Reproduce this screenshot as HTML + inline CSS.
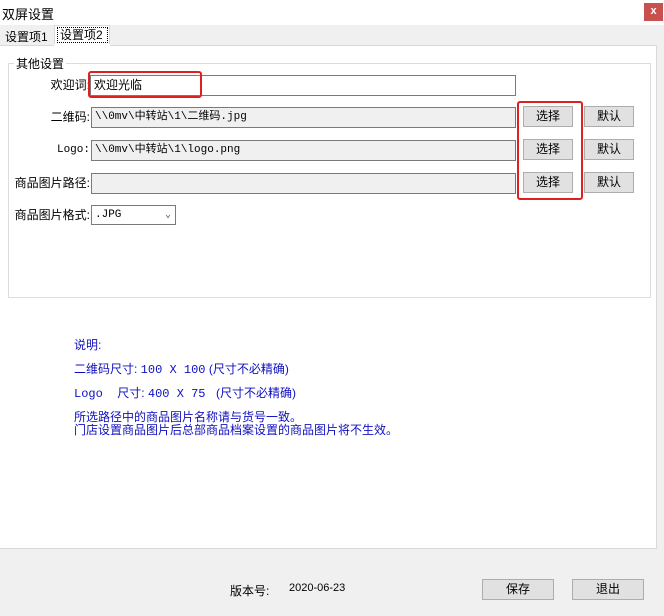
<!DOCTYPE html>
<html><head><meta charset="utf-8"><style>
*{box-sizing:border-box;margin:0;padding:0}
body{width:664px;height:616px;background:#f0f0f0;position:relative;overflow:hidden;font-family:"Liberation Sans","Noto Sans CJK SC",sans-serif;font-size:12px;color:#000}
.a{position:absolute}
.inp{position:absolute;border:1px solid #7a7a7a;background:#f0f0f0;height:21px;font-family:"Liberation Mono","Noto Sans CJK SC",monospace;font-size:11px;line-height:19px;padding-left:3px;white-space:nowrap}
.btn{position:absolute;border:1px solid #adadad;background:#e1e1e1;height:21px;text-align:center;line-height:19px;font-size:12px}
.lbl{position:absolute;text-align:right;font-size:12px;line-height:20px;white-space:nowrap}
.blue{position:absolute;left:74px;color:#1010c0;font-size:12px;line-height:14px;white-space:nowrap}
</style></head><body>
<div class="a" style="left:0;top:0;width:664px;height:25px;background:#fff"></div>
<div class="a" style="left:2px;top:4px;font-size:13px">双屏设置</div>
<div class="a" style="left:644px;top:3px;width:19px;height:18px;background:#c8504e;color:#fff;font-size:11px;text-align:center;line-height:17px;font-weight:bold">x</div>
<div class="a" style="left:2px;top:28px;width:52px;height:18px;font-size:12px;line-height:18px;padding-left:3px;white-space:nowrap">设置项1</div>
<div class="a" style="left:54px;top:25px;width:56px;height:21px;background:#fff;border:1px solid #d9d9d9;border-bottom:none"></div>
<div class="a" style="left:57px;top:27px;width:51px;height:16px;border:1px dotted #000;font-size:12px;line-height:14px;padding-left:2px;white-space:nowrap">设置项2</div>
<div class="a" style="left:0;top:45px;width:657px;height:504px;background:#fff;border:1px solid #d9d9d9;border-left:none"></div>
<div class="a" style="left:54px;top:44px;width:56px;height:3px;background:#fff"></div>
<div class="a" style="left:8px;top:63px;width:643px;height:235px;border:1px solid #dcdcdc"></div>
<div class="a" style="left:14px;top:55px;background:#fff;padding:0 2px;font-size:12px">其他设置</div>
<div class="lbl" style="left:0;top:75px;width:90px">欢迎词:</div>
<div class="inp" style="left:90px;top:75px;width:426px;background:#fff;font-family:'Liberation Sans','Noto Sans CJK SC',sans-serif;font-size:12px">欢迎光临</div>
<div class="a" style="left:88px;top:71px;width:114px;height:27px;border:2px solid #e02020;border-radius:3px"></div>
<div class="lbl" style="left:0;top:107px;width:90px">二维码:</div>
<div class="inp" style="left:91px;top:107px;width:425px">\\0mv\中转站\1\二维码.jpg</div>
<div class="lbl" style="left:0;top:140px;width:90px;font-family:'Liberation Mono',monospace;font-size:11px">Logo:</div>
<div class="inp" style="left:91px;top:140px;width:425px">\\0mv\中转站\1\logo.png</div>
<div class="lbl" style="left:0;top:173px;width:90px">商品图片路径:</div>
<div class="inp" style="left:91px;top:173px;width:425px"></div>
<div class="lbl" style="left:0;top:205px;width:90px">商品图片格式:</div>
<div class="inp" style="left:91px;top:205px;width:85px;height:20px;background:#fff">.JPG<span style="position:absolute;right:4px;top:0;font-size:10px;color:#555">&#8964;</span></div>
<div class="btn" style="left:523px;top:106px;width:50px">选择</div>
<div class="btn" style="left:584px;top:106px;width:50px">默认</div>
<div class="btn" style="left:523px;top:139px;width:50px">选择</div>
<div class="btn" style="left:584px;top:139px;width:50px">默认</div>
<div class="btn" style="left:523px;top:172px;width:50px">选择</div>
<div class="btn" style="left:584px;top:172px;width:50px">默认</div>
<div class="a" style="left:517px;top:101px;width:66px;height:99px;border:2px solid #e02020;border-radius:3px"></div>
<div class="blue" style="top:338px">说明:</div>
<div class="blue" style="top:362px">二维码尺寸: <span style="font-family:'Liberation Mono',monospace">100 X 100</span> (尺寸不必精确)</div>
<div class="blue" style="top:386px"><span style="font-family:'Liberation Mono',monospace">Logo&nbsp;&nbsp;</span>尺寸: <span style="font-family:'Liberation Mono',monospace">400 X 75&nbsp;</span> (尺寸不必精确)</div>
<div class="blue" style="top:410px">所选路径中的商品图片名称请与货号一致。</div>
<div class="blue" style="top:423px">门店设置商品图片后总部商品档案设置的商品图片将不生效。</div>
<div class="a" style="left:230px;top:582px;font-size:12px">版本号:</div>
<div class="a" style="left:289px;top:582px;font-size:11px">2020-06-23</div>
<div class="btn" style="left:482px;top:579px;width:72px;height:21px">保存</div>
<div class="btn" style="left:572px;top:579px;width:72px;height:21px">退出</div>
</body></html>
